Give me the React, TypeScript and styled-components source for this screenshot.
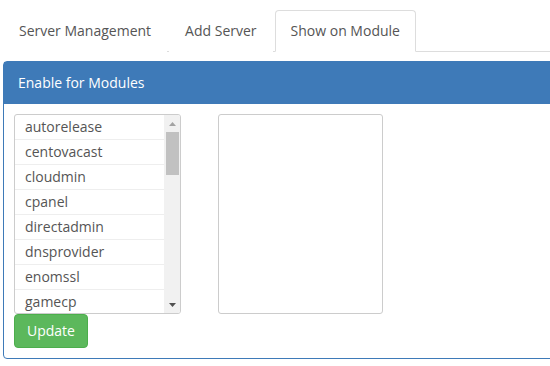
import * as React from "react";
import styled, { createGlobalStyle } from "styled-components";

const modules = [
  "autorelease",
  "centovacast",
  "cloudmin",
  "cpanel",
  "directadmin",
  "dnsprovider",
  "enomssl",
  "gamecp",
];

const tabs = ["Server Management", "Add Server", "Show on Module"];

export default function App() {
  return (
    <>
      <GlobalStyle />
      <Page>
        <TabBar>
          {tabs.map((t) => (
            <Tab key={t} active={t === "Show on Module"}>
              {t}
            </Tab>
          ))}
        </TabBar>
        <Panel>
          <PanelHeading>Enable for Modules</PanelHeading>
          <PanelBody>
            <Selects>
              <ListBox>
                <Items>
                  {modules.map((m) => (
                    <Item key={m}>{m}</Item>
                  ))}
                </Items>
                <ScrollTrack>
                  <ArrowButton>
                    <svg width="7" height="4" viewBox="0 0 7 4">
                      <path d="M0 4 L3.5 0 L7 4 Z" fill="#a3a3a3" />
                    </svg>
                  </ArrowButton>
                  <Thumb />
                  <TrackSpace />
                  <ArrowButton>
                    <svg width="7" height="4" viewBox="0 0 7 4">
                      <path d="M0 0 L7 0 L3.5 4 Z" fill="#505050" />
                    </svg>
                  </ArrowButton>
                </ScrollTrack>
              </ListBox>
              <EmptyBox />
            </Selects>
            <UpdateButton>Update</UpdateButton>
          </PanelBody>
        </Panel>
      </Page>
    </>
  );
}

const GlobalStyle = createGlobalStyle`
  html, body {
    margin: 0;
    background: #fff;
    overflow: hidden;
  }
  body {
    font-family: "Open Sans", "Liberation Sans", sans-serif;
    font-size: 14px;
    color: #333;
  }
`;

const Page = styled.div`
  width: 580px;
  padding: 10px 0 0 3px;
`;

const TabBar = styled.div`
  display: flex;
  border-bottom: 1px solid #ddd;
`;

const Tab = styled.div<{ active?: boolean }>`
  padding: 10px 15px;
  margin-right: 2px;
  line-height: 20px;
  color: #555;
  border: 1px solid ${(p) => (p.active ? "#ddd" : "transparent")};
  border-bottom-color: ${(p) => (p.active ? "#fff" : "transparent")};
  border-radius: 4px 4px 0 0;
  margin-bottom: -1px;
  background: #fff;
`;

const Panel = styled.div`
  margin-top: 9px;
  border: 1px solid #3e7ab8;
  border-radius: 4px;
  background: #fff;
`;

const PanelHeading = styled.div`
  background: #3e7ab8;
  color: #fff;
  padding: 10px 14px;
  line-height: 22px;
`;

const PanelBody = styled.div`
  padding: 10px 10px 10px;
`;

const Selects = styled.div`
  display: flex;
  gap: 37px;
`;

const ListBox = styled.div`
  display: flex;
  width: 165px;
  height: 198px;
  border: 1px solid #ccc;
  border-radius: 3px;
  overflow: hidden;
`;

const Items = styled.div`
  flex: 1;
  overflow: hidden;
`;

const Item = styled.div`
  height: 24px;
  line-height: 24px;
  padding: 0 10px;
  color: #555;
  border-bottom: 1px solid #eee;
`;

const ScrollTrack = styled.div`
  width: 16px;
  background: #f1f1f1;
  display: flex;
  flex-direction: column;
  align-items: center;
`;

const ArrowButton = styled.div`
  height: 17px;
  width: 16px;
  display: flex;
  align-items: center;
  justify-content: center;
`;

const Thumb = styled.div`
  width: 13px;
  height: 43px;
  background: #c1c1c1;
`;

const TrackSpace = styled.div`
  flex: 1;
`;

const EmptyBox = styled.div`
  width: 163px;
  height: 198px;
  border: 1px solid #ccc;
  border-radius: 3px;
`;

const UpdateButton = styled.div`
  display: inline-block;
  padding: 6px 12px;
  line-height: 20px;
  color: #fff;
  background: #5cb85c;
  border: 1px solid #4cae4c;
  border-radius: 4px;
`;
